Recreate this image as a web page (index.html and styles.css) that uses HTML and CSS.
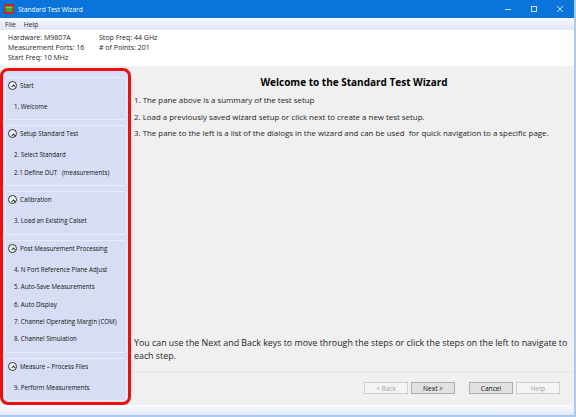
FILE: index.html
```html
<!DOCTYPE html>
<html>
<head>
<meta charset="utf-8">
<link rel="stylesheet" href="styles.css">
</head>
<body>
<div class="window">
  <div class="titlebar">
    <svg class="appicon" width="10" height="10" viewBox="0 0 10 10">
      <rect x="0" y="0" width="10" height="10" fill="#c0252a"/>
      <rect x="1.5" y="2.5" width="7" height="5.5" fill="#3fa535"/>
      <rect x="1.5" y="2.5" width="7" height="1.5" fill="#7acb3a"/>
    </svg>
    <span class="title">Standard Test Wizard</span>
    <div class="controls">
      <svg class="ctl" width="26" height="18" viewBox="0 0 26 18"><line x1="10" y1="9.5" x2="16" y2="9.5" stroke="#fff" stroke-width="0.8"/></svg>
      <svg class="ctl" width="26" height="18" viewBox="0 0 26 18"><rect x="10.5" y="6.5" width="5" height="5" fill="none" stroke="#fff" stroke-width="0.8"/></svg>
      <svg class="ctl" width="26" height="18" viewBox="0 0 26 18"><path d="M10 6 L16 12 M16 6 L10 12" stroke="#fff" stroke-width="0.8"/></svg>
    </div>
  </div>
  <div class="menubar">
    <span class="menu">File</span>
    <span class="menu">Help</span>
  </div>
  <div class="summary">
    <div class="col">
      <div>Hardware: M9807A</div>
      <div>Measurement Ports: 16</div>
      <div>Start Freq: 10 MHz</div>
    </div>
    <div class="col">
      <div>Stop Freq: 44 GHz</div>
      <div># of Points: 201</div>
    </div>
  </div>
  <div class="body">
    <div class="sidebar">
      <div class="group">
        <div class="ghead"><span class="chev"></span>Start</div>
        <div class="items"><div class="item">1. Welcome</div></div>
      </div>
      <div class="group">
        <div class="ghead"><span class="chev"></span>Setup Standard Test</div>
        <div class="items">
          <div class="item">2. Select Standard</div>
          <div class="item">2.1 Define DUT&nbsp;&nbsp; (measurements)</div>
        </div>
      </div>
      <div class="group">
        <div class="ghead"><span class="chev"></span>Calibration</div>
        <div class="items"><div class="item">3. Load an Existing Calset</div></div>
      </div>
      <div class="group">
        <div class="ghead"><span class="chev"></span>Post Measurement Processing</div>
        <div class="items">
          <div class="item">4. N Port Reference Plane Adjust</div>
          <div class="item">5. Auto-Save Measurements</div>
          <div class="item">6. Auto Display</div>
          <div class="item">7. Channel Operating Margin (COM)</div>
          <div class="item">8. Channel Simulation</div>
        </div>
      </div>
      <div class="group">
        <div class="ghead"><span class="chev"></span>Measure – Process Files</div>
        <div class="items"><div class="item">9. Perform Measurements</div></div>
      </div>
    </div>
    <div class="content">
      <h1 class="heading">Welcome to the Standard Test Wizard</h1>
      <div class="steps">
        <div>1. The pane above is a summary of the test setup</div>
        <div>2. Load a previously saved wizard setup or click next to create a new test setup.</div>
        <div>3. The pane to the left is a list of the dialogs in the wizard and can be used&nbsp; for quick navigation to a specific page.</div>
      </div>
      <div class="spacer"></div>
      <div class="note">You can use the Next and Back keys to move through the steps or click the steps on the left to navigate to each step.</div>
      <div class="divider"></div>
      <div class="buttons">
        <span class="btn disabled">&lt; Back</span>
        <span class="btn">Next &gt;</span>
        <span class="btn sep">Cancel</span>
        <span class="btn disabled">Help</span>
      </div>
    </div>
  </div>
  <div class="footer"></div>
</div>
</body>
</html>
```
FILE: styles.css
```css
* { box-sizing: border-box; }
html, body { margin: 0; padding: 0; }
body {
  width: 576px;
  height: 417px;
  overflow: hidden;
  background: #ffffff;
  font-family: "Open Sans", "Noto Sans", sans-serif;
  color: #1e1e1e;
}
.window {
  width: 576px;
  height: 417px;
  display: flex;
  flex-direction: column;
  border-right: 2px solid #a9cbee;
}
.titlebar {
  height: 18px;
  background: #0a74da;
  display: flex;
  align-items: center;
  color: #fff;
  flex: none;
}
.appicon { margin-left: 4px; margin-right: 4px; }
.title { font-size: 6.5px; }
.controls { margin-left: auto; display: flex; margin-right: 1px; }
.ctl { display: block; }
.menubar {
  height: 12px;
  flex: none;
  background: linear-gradient(#f7f9fe, #dfe6f7);
  display: flex;
  align-items: center;
  font-size: 6.8px;
  padding-left: 5px;
  gap: 8px;
}
.summary {
  height: 36px;
  flex: none;
  background: #fff;
  display: flex;
  padding: 3px 0 0 8px;
  font-size: 7px;
  line-height: 10px;
}
.summary .col { width: 91px; }
.body {
  height: 339px;
  flex: none;
  display: flex;
  background: #f0f0f0;
}
.sidebar {
  margin-top: 2px;
  width: 131px;
  height: 337px;
  border: 3.5px solid #ea1010;
  border-radius: 8px;
  background: #d7ddf5;
  padding: 5.5px 1px 0 2px;
  display: flex;
  flex-direction: column;
  gap: 5.5px;
  font-size: 6.2px;
  color: #111;
}
.group {
  border: 1px solid #e9ecfb;
  border-radius: 3px;
  padding-bottom: 4px;
}
.ghead {
  height: 15px;
  display: flex;
  align-items: center;
  padding-left: 2px;
}
.chev {
  width: 9px;
  height: 9px;
  border: 0.8px solid #333;
  border-radius: 50%;
  background: #f4f5fb;
  margin-right: 3px;
  position: relative;
}
.chev::after {
  content: "";
  position: absolute;
  left: 2.6px;
  top: 3.3px;
  width: 2px;
  height: 2px;
  border-left: 1.1px solid #222;
  border-top: 1.1px solid #222;
  transform: rotate(45deg);
}
.items { padding-top: 5px; }
.item {
  height: 17.3px;
  line-height: 17.3px;
  padding-left: 8px;
  white-space: nowrap;
}
.content {
  flex: 1;
  display: flex;
  flex-direction: column;
  padding-left: 3px;
  min-width: 0;
}
.heading {
  margin: 8px 0 0 0;
  font-size: 10px;
  line-height: 16px;
  font-weight: 700;
  text-align: center;
  color: #000;
}
.steps {
  margin-top: 2px;
  font-size: 7.9px;
  line-height: 16.5px;
}
.spacer { flex: 1; }
.note {
  font-size: 8.85px;
  line-height: 13px;
}
.divider {
  margin-top: 8.5px;
  height: 1px;
  background: #e6e6e6;
  margin-left: -3px;
}
.buttons {
  height: 33px;
  display: flex;
  justify-content: flex-end;
  align-items: flex-start;
  padding-top: 10px;
  padding-right: 14px;
  gap: 3px;
}
.btn {
  width: 44px;
  height: 12px;
  border: 1px solid #adadad;
  background: #e1e1e1;
  font-size: 6.6px;
  display: flex;
  align-items: center;
  justify-content: center;
  color: #111;
}
.btn.disabled {
  border-color: #d0d0d0;
  background: #f4f4f4;
  color: #a3a3a3;
}
.btn.sep { margin-left: 11px; }
.footer {
  flex: 1;
  background: linear-gradient(#fbfcff 0%, #dfe7f7 80%, #a9cbee 80%, #a9cbee 100%);
}
```
